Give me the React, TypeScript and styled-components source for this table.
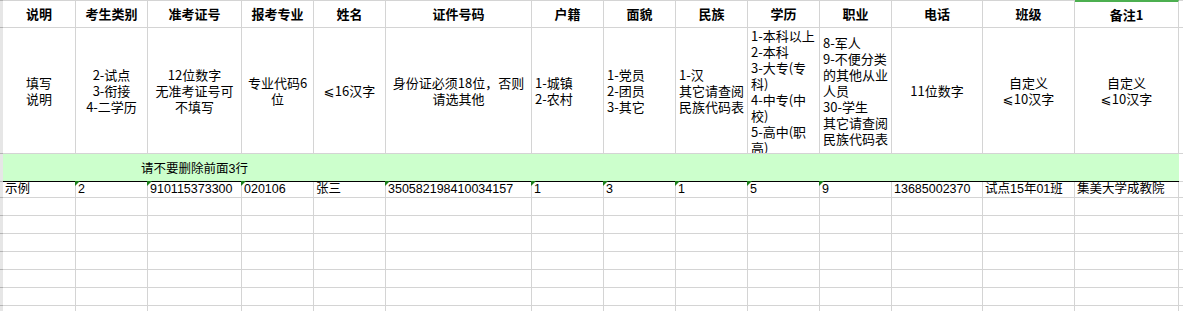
import React from "react";
import styled, { createGlobalStyle } from "styled-components";

const Global = createGlobalStyle`
  html, body { margin: 0; padding: 0; background: #fff; overflow: hidden; }
  body { width: 1183px; height: 311px; }
`;

const LINE = "#d4d4d4";
const CJK = `"Noto Sans CJK SC", "DejaVu Sans", sans-serif`;
const DATA = `"Liberation Sans", "Noto Sans CJK SC", sans-serif`;

const Sheet = styled.div`
  display: grid;
  grid-template-columns: 3px 73px 72px 94px 72px 72px 146px 72px 72px 72px 72px 72px 91px 92px 104px 20px;
  grid-template-rows: 28px 126px 28px 16px repeat(7, 18px);
  width: 1200px;
  color: #000;
`;

const Gutter = styled.div<{ $first?: boolean }>`
  box-sizing: border-box;
  background: #e6e6e6;
  border-bottom: 1px solid #b4b4b4;
  border-top: ${(p) => (p.$first ? "1px solid #b4b4b4" : "none")};
`;

const HeadCell = styled.div<{ $selected?: boolean }>`
  box-sizing: border-box;
  display: flex;
  align-items: center;
  justify-content: center;
  border-top: ${(p) => (p.$selected ? "2px solid #4caf50" : `1px solid ${LINE}`)};
  border-right: 1px solid ${LINE};
  border-bottom: 1px solid ${LINE};
  font-family: ${CJK};
  font-weight: 700;
  font-size: 13px;
  line-height: 16px;
  white-space: nowrap;
`;

const NoteCell = styled.div<{ $align: "left" | "center"; $top?: boolean }>`
  box-sizing: border-box;
  display: flex;
  flex-direction: column;
  justify-content: ${(p) => (p.$top ? "flex-start" : "center")};
  align-items: ${(p) => (p.$align === "left" ? "flex-start" : "center")};
  text-align: ${(p) => p.$align};
  padding: 0 ${(p) => (p.$align === "left" ? "0 0 3px" : "1px")};
  border-right: 1px solid ${LINE};
  border-bottom: 1px solid ${LINE};
  font-family: ${CJK};
  font-size: 13px;
  line-height: 16px;
  overflow: hidden;
  white-space: pre;
`;

const Banner = styled.div`
  box-sizing: border-box;
  grid-column: span 5;
  display: flex;
  align-items: center;
  justify-content: center;
  background: #ccffcc;
  border-bottom: 1px solid #000;
  font-family: ${DATA};
  font-size: 12.5px;
`;

const BannerFill = styled.div`
  box-sizing: border-box;
  grid-column: span 9;
  background: #ccffcc;
  border-bottom: 1px solid #000;
`;

const DataCell = styled.div`
  position: relative;
  box-sizing: border-box;
  display: flex;
  align-items: center;
  padding-left: 2px;
  border-right: 1px solid ${LINE};
  border-bottom: 1px solid ${LINE};
  font-family: ${DATA};
  font-size: 12.5px;
  line-height: 15px;
  white-space: nowrap;
  overflow: visible;
`;

const Marker = styled.span`
  position: absolute;
  left: -1px;
  top: -1px;
  width: 0;
  height: 0;
  border-top: 5px solid #1a7f1a;
  border-right: 5px solid transparent;
`;

const EmptyCell = styled.div<{ $noRight?: boolean }>`
  box-sizing: border-box;
  border-right: ${(p) => (p.$noRight ? "none" : `1px solid ${LINE}`)};
  border-bottom: 1px solid ${LINE};
`;

type Col = {
  h: string;
  d: string;
  align: "left" | "center";
  top?: boolean;
  v: string;
  tri?: boolean;
  selected?: boolean;
  pad?: number;
};

const cols: Col[] = [
  { h: "说明", d: "填写\n说明", align: "center", v: "示例" },
  { h: "考生类别", d: "2-试点\n3-衔接\n4-二学历", align: "center", v: "2", tri: true },
  { h: "准考证号", d: "12位数字\n无准考证号可\n不填写", align: "center", v: "910115373300", tri: true },
  { h: "报考专业", d: "专业代码6\n位", align: "center", v: "020106", tri: true },
  { h: "姓名", d: "⩽16汉字", align: "center", v: "张三" },
  { h: "证件号码", d: "身份证必须18位，否则\n请选其他", align: "center", v: "350582198410034157", tri: true },
  { h: "户籍", d: "1-城镇\n2-农村", align: "left", v: "1", tri: true },
  { h: "面貌", d: "1-党员\n2-团员\n3-其它", align: "left", v: "3", tri: true },
  { h: "民族", d: "1-汉\n其它请查阅\n民族代码表", align: "left", v: "1", tri: true },
  {
    h: "学历",
    d: "1-本科以上\n2-本科\n3-大专(专\n科)\n4-中专(中\n校)\n5-高中(职\n高)",
    align: "left",
    top: true,
    v: "5",
    tri: true,
  },
  {
    h: "职业",
    d: "8-军人\n9-不便分类\n的其他从业\n人员\n30-学生\n其它请查阅\n民族代码表",
    align: "left",
    v: "9",
    tri: true,
  },
  { h: "电话", d: "11位数字", align: "center", v: "13685002370" },
  { h: "班级", d: "自定义\n⩽10汉字", align: "center", v: "试点15年01班" },
  { h: "备注1", d: "自定义\n⩽10汉字", align: "center", v: "集美大学成教院", selected: true },
];

const emptyRows = Array.from({ length: 7 }, (_, i) => i);

export default function App() {
  return (
    <>
      <Global />
      <Sheet>
        <Gutter $first />
        {cols.map((c) => (
          <HeadCell key={c.h} $selected={c.selected}>
            {c.h}
          </HeadCell>
        ))}
        <EmptyCell $noRight style={{ borderTop: `1px solid ${LINE}` }} />

        <Gutter />
        {cols.map((c) => (
          <NoteCell key={c.h} $align={c.align} $top={c.top}>
            {c.d}
          </NoteCell>
        ))}
        <EmptyCell $noRight />

        <Gutter />
        <Banner>请不要删除前面3行</Banner>
        <BannerFill />
        <EmptyCell $noRight />

        <Gutter />
        {cols.map((c) => (
          <DataCell key={c.h}>
            {c.tri && <Marker />}
            {c.v}
          </DataCell>
        ))}
        <EmptyCell $noRight />

        {emptyRows.map((r) => (
          <React.Fragment key={r}>
            <Gutter />
            {cols.map((c) => (
              <EmptyCell key={c.h} />
            ))}
            <EmptyCell $noRight />
          </React.Fragment>
        ))}
      </Sheet>
    </>
  );
}
